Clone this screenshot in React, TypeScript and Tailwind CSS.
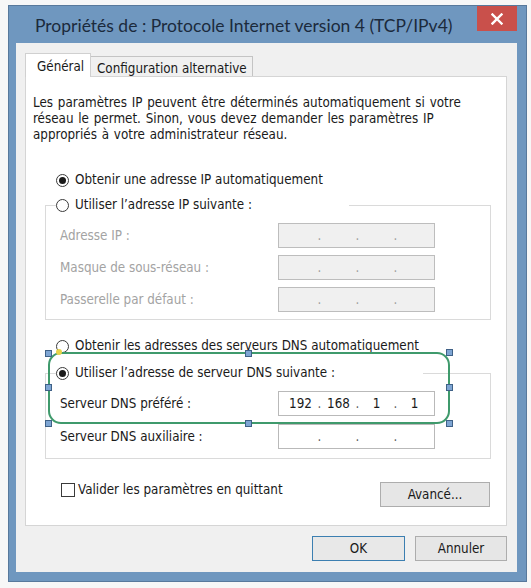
import React from "react";

const body = { fontFamily: '"DejaVu Sans Condensed", "Liberation Sans", Arial, sans-serif' } as React.CSSProperties;

function Radio({ checked }: { checked?: boolean }) {
  return (
    <div className="w-[13px] h-[13px] rounded-full border border-[#3a3a3a] bg-white flex items-center justify-center shrink-0">
      {checked && <div className="w-[7px] h-[7px] rounded-full bg-[#1a1a1a]" />}
    </div>
  );
}

function IpField({ value, disabled }: { value?: string[]; disabled?: boolean }) {
  const segs = value ?? ["", "", "", ""];
  return (
    <div
      className={
        "w-[157px] h-[25px] border flex items-center pl-[6px] " +
        (disabled ? "bg-[#f0f0f0] border-[#bdbdbd] text-[#9a9a9a]" : "bg-white border-[#b9b9b9] text-[#1a1a1a]")
      }
    >
      {segs.map((s, i) => (
        <React.Fragment key={i}>
          <div className="w-[31px] text-center">{s}</div>
          {i < 3 && <div className={"w-[7px] text-center " + (disabled ? "text-[#a0a0a0]" : "text-[#606060]")}>.</div>}
        </React.Fragment>
      ))}
    </div>
  );
}

function Row({ label, disabled, value, className }: { label: string; disabled?: boolean; value?: string[]; className?: string }) {
  return (
    <div className={"flex items-center h-[25px] " + (className ?? "")}>
      <div className={"w-[232px] pl-[14px] " + (disabled ? "text-[#a3a3a3]" : "text-[#1a1a1a]")}>{label}</div>
      <IpField value={value} disabled={disabled} />
    </div>
  );
}

function GroupHeader({ label, width, checked }: { label: string; width: string; checked?: boolean }) {
  return (
    <div className="flex h-[18px]">
      <div className="w-[11px] h-[9px] self-end border-l border-t border-[#dadada]" />
      <div className={"flex items-center gap-[6px] " + width}>
        <Radio checked={checked} />
        <span>{label}</span>
      </div>
      <div className="flex-1 h-[9px] self-end border-r border-t border-[#dadada]" />
    </div>
  );
}

function Handle({ x, y }: { x: number; y: number }) {
  return (
    <div
      className="absolute w-[7px] h-[7px] bg-[#7ea5d3] border border-[#3f6187]"
      style={{ left: x - 3, top: y - 3 }}
    />
  );
}

export default function App() {
  return (
    <div className="w-[531px] h-[588px] bg-[#f7f7f7] pt-[5px] pl-[8px] relative overflow-hidden" style={body}>
      <div className="w-[519px] h-[577px] bg-[#6f97bf] border border-[#58799c] flex flex-col">
        {/* title bar */}
        <div className="h-[37px] flex items-start">
          <div
            className="pl-[26px] self-center text-[17.5px] text-[#1b2a3c] leading-none pt-[2px] whitespace-nowrap"
            style={{ fontFamily: 'Lato, "Noto Sans", sans-serif' }}
          >
            Propriétés de : Protocole Internet version 4 (TCP/IPv4)
          </div>
          <div className="ml-auto mr-[9px] w-[40px] h-[25px] bg-[#c9504b] flex items-center justify-center shrink-0">
            <svg width="12" height="12" viewBox="0 0 12 12">
              <path d="M1.5 1.5 L10.5 10.5 M10.5 1.5 L1.5 10.5" stroke="white" strokeWidth="2.4" strokeLinecap="square" />
            </svg>
          </div>
        </div>
        {/* client */}
        <div className="ml-[7px] mr-[9px] h-[529px] bg-[#f0f0f0] text-[13.3px] text-[#1a1a1a] flex flex-col">
          <div className="pl-[9px] pt-[10px] flex items-start h-[34px] -mb-px relative z-10">
            <div className="w-[66px] h-[24px] bg-white border-t border-l border-r border-[#d0d0d0] pl-[11px] pt-[3px]">Général</div>
            <div className="mt-[3px] w-[162px] h-[20px] bg-[#f0f0f0] border-t border-r border-[#c4c4c4] pl-[6px] pt-[2px] whitespace-nowrap">
              Configuration alternative
            </div>
          </div>
          <div className="ml-[9px] w-[482px] h-[450px] bg-white border border-[#d5d5d5] flex flex-col">
            <p className="pl-[7px] pt-[18px] leading-[16px] whitespace-nowrap [word-spacing:1px]">
              Les paramètres IP peuvent être déterminés automatiquement si votre
              <br />
              réseau le permet. Sinon, vous devez demander les paramètres IP
              <br />
              appropriés à votre administrateur réseau.
            </p>
            <div className="mt-[29px] ml-[30px] h-[16px] flex items-center gap-[6px]">
              <Radio checked />
              <span>Obtenir une adresse IP automatiquement</span>
            </div>
            <div className="ml-[19px] w-[446px] mt-[8px]">
              <GroupHeader label="Utiliser l’adresse IP suivante :" width="w-[293px]" />
              <div className="border-l border-r border-b border-[#dadada] pt-[9px] pb-[7px]">
                <Row label="Adresse IP :" disabled />
                <Row label="Masque de sous-réseau :" disabled className="mt-[7px]" />
                <Row label="Passerelle par défaut :" disabled className="mt-[7px]" />
              </div>
            </div>
            <div className="mt-[18px] ml-[30px] h-[16px] flex items-center gap-[6px]">
              <Radio />
              <span>Obtenir les adresses des serveurs DNS automatiquement</span>
            </div>
            <div className="ml-[19px] w-[446px] mt-[10px]">
              <GroupHeader label="Utiliser l’adresse de serveur DNS suivante :" width="w-[367px]" checked />
              <div className="border-l border-r border-b border-[#dadada] pt-[9px] pb-[9px]">
                <Row label="Serveur DNS préféré :" value={["192", "168", "1", "1"]} />
                <Row label="Serveur DNS auxiliaire :" className="mt-[8px]" />
              </div>
            </div>
            <div className="mt-[23px] flex items-start">
              <div className="ml-[35px] mt-[1px] w-[14px] h-[14px] border border-[#3a3a3a] bg-white" />
              <span className="ml-[3px] leading-[16px]">Valider les paramètres en quittant</span>
              <div className="ml-auto mr-[16px] w-[110px] h-[25px] border border-[#adadad] bg-[#e6e6e6] flex items-center justify-center">
                Avancé...
              </div>
            </div>
          </div>
          <div className="mt-[10px] flex justify-end gap-[10px] pr-[10px]">
            <div className="w-[93px] h-[25px] border border-[#3c7fb1] bg-[#e8e8e8] flex items-center justify-center">OK</div>
            <div className="w-[92px] h-[25px] border border-[#adadad] bg-[#e6e6e6] flex items-center justify-center">Annuler</div>
          </div>
        </div>
      </div>

      {/* annotation overlay */}
      <div className="absolute left-[48px] top-[352px] w-[402px] h-[72px] border-2 border-[#3f9a6c] rounded-[13px]" />
      <div className="absolute left-[56px] top-[349px] w-[6px] h-[6px] rounded-full bg-[#e8d44a]" />
      <Handle x={48} y={353} />
      <Handle x={248} y={353} />
      <Handle x={449} y={352} />
      <Handle x={48} y={387} />
      <Handle x={449} y={387} />
      <Handle x={48} y={423} />
      <Handle x={248} y={423} />
      <Handle x={449} y={423} />
    </div>
  );
}
